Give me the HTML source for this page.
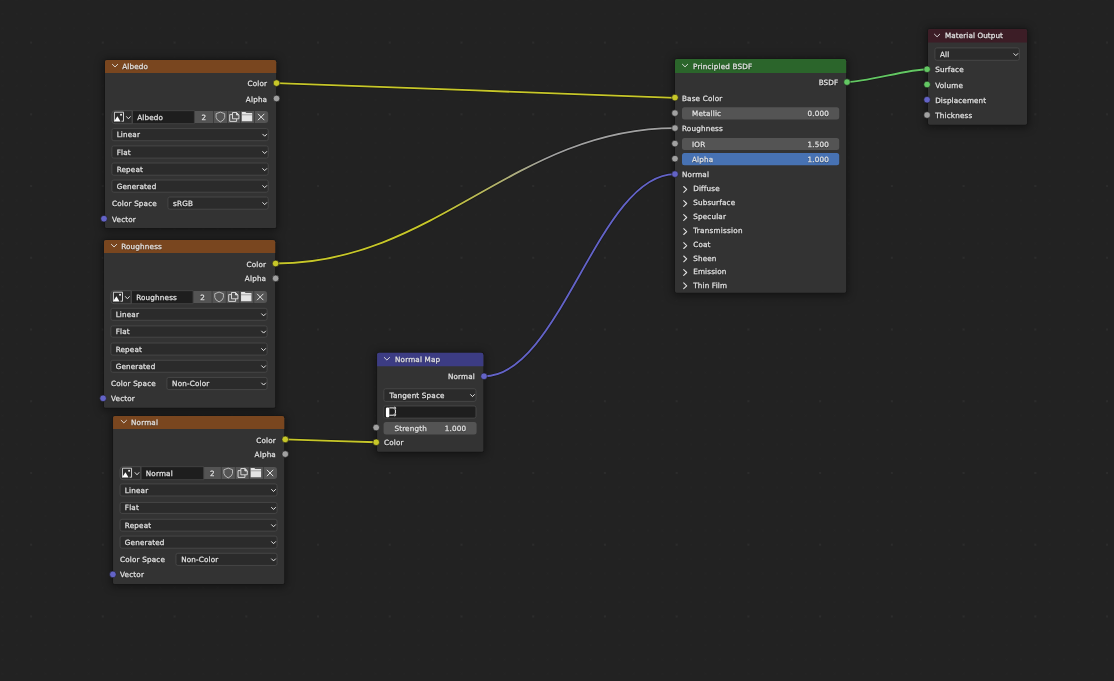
<!DOCTYPE html>
<html><head><meta charset="utf-8"><title>Shader Nodes</title>
<style>
*{box-sizing:border-box;margin:0;padding:0}
html,body{width:1114px;height:681px;overflow:hidden;background:#222222}
body{position:relative;font-family:"DejaVu Sans", "Liberation Sans", sans-serif;font-size:7.2px;color:#e3e3e3;line-height:1}
.sh{position:absolute;border-radius:2px;box-shadow:0 1px 9px 2px rgba(0,0,0,.42)}
.t{position:absolute;white-space:nowrap;letter-spacing:0.18px;-webkit-text-stroke:0.25px #e3e3e3;text-shadow:0 1px 1px rgba(0,0,0,.55);line-height:10px;height:10px}
svg{position:absolute;left:0;top:0;overflow:visible}
.lay{position:absolute;left:0;top:0;width:1114px;height:681px;will-change:transform}
</style></head><body>
<svg width="1114" height="681" viewBox="0 0 1114 681"><defs><linearGradient id="yg" gradientUnits="userSpaceOnUse" x1="275" y1="0" x2="675" y2="0"><stop offset="0.4" stop-color="#c7c729"/><stop offset="0.68" stop-color="#a1a1a1"/></linearGradient><pattern id="gmin" x="23.92" y="35.41" width="14.346" height="14.346" patternUnits="userSpaceOnUse"><rect x="6.62" y="6.62" width="1.1" height="1.1" fill="#252525"/></pattern><pattern id="gmaj" x="-4.77" y="6.71" width="71.730" height="71.730" patternUnits="userSpaceOnUse"><rect x="35.07" y="35.07" width="1.6" height="1.6" fill="#303030"/></pattern></defs>
<rect x="0" y="0" width="1114" height="681" fill="url(#gmin)"/><rect x="0" y="0" width="1114" height="681" fill="url(#gmaj)"/></svg>
<div class="lay"><div class="sh" style="left:105px;top:60px;width:171.25px;height:168px"></div><div class="sh" style="left:104px;top:240px;width:171.25px;height:167.8px"></div><div class="sh" style="left:113.05px;top:416px;width:171.25px;height:168px"></div><div class="sh" style="left:377.1px;top:352.75px;width:106.3px;height:99.1px"></div><div class="sh" style="left:675px;top:59.1px;width:171.2px;height:233.6px"></div><div class="sh" style="left:928px;top:29px;width:99.1px;height:95.7px"></div></div>
<svg width="1114" height="681" viewBox="0 0 1114 681"><path d="M276.5 83.1 C297.08 83.1 654.42 97.8 675 97.8" fill="none" stroke="#171717" stroke-width="3.1"/><path d="M276.5 83.1 C297.08 83.1 654.42 97.8 675 97.8" fill="none" stroke="#c7c729" stroke-width="1.85"/><path d="M275.6 263.5 C435.36 263.5 515.24 128.1 675 128.1" fill="none" stroke="#171717" stroke-width="3.1"/><path d="M275.6 263.5 C435.36 263.5 515.24 128.1 675 128.1" fill="none" stroke="url(#yg)" stroke-width="1.85"/><path d="M285.25 439.4 C289.24 439.4 372.21 442.25 376.2 442.25" fill="none" stroke="#171717" stroke-width="3.1"/><path d="M285.25 439.4 C289.24 439.4 372.21 442.25 376.2 442.25" fill="none" stroke="#c7c729" stroke-width="1.85"/><path d="M484 376.25 C560.4 376.25 598.6 174.1 675 174.1" fill="none" stroke="#171717" stroke-width="3.1"/><path d="M484 376.25 C560.4 376.25 598.6 174.1 675 174.1" fill="none" stroke="#6363c7" stroke-width="1.85"/><path d="M847 82.1 C864.99 82.1 909.11 69.25 927.1 69.25" fill="none" stroke="#171717" stroke-width="3.1"/><path d="M847 82.1 C864.99 82.1 909.11 69.25 927.1 69.25" fill="none" stroke="#63c763" stroke-width="1.85"/></svg>
<svg width="1114" height="681" viewBox="0 0 1114 681"><path d="M106.8 59.4 L274.25 59.4 Q276.85 59.4 276.85 62 L276.85 226.4 Q276.85 228.6 274.65 228.6 L106.6 228.6 Q104.4 228.6 104.4 226.4 L104.4 61.8 Q104.4 59.4 106.8 59.4 Z" fill="#151515"/><path d="M106.8 60 L274.05 60 Q276.25 60 276.25 62.2 L276.25 226.4 Q276.25 228 274.65 228 L106.6 228 Q105 228 105 226.4 L105 61.8 Q105 60 106.8 60 Z" fill="#333333"/><path d="M106.8 60 L274.05 60 Q276.25 60 276.25 62.2 L276.25 73.1 Q276.25 73.1 276.25 73.1 L105 73.1 Q105 73.1 105 73.1 L105 61.8 Q105 60 106.8 60 Z" fill="#79461f"/><path d="M194.4 111 L265.2 111 Q268.2 111 268.2 114 L268.2 120.1 Q268.2 123.1 265.2 123.1 L194.4 123.1 Q194.4 123.1 194.4 123.1 L194.4 111 Q194.4 111 194.4 111 Z" fill="#545454"/><path d="M115 110.7 L132.3 110.7 Q132.3 110.7 132.3 110.7 L132.3 123.7 Q132.3 123.7 132.3 123.7 L115 123.7 Q112 123.7 112 120.7 L112 113.7 Q112 110.7 115 110.7 Z" fill="#2b2b2b" stroke="#4e4e4e" stroke-width="0.9"/><path d="M132.3 110.7 L194.4 110.7 Q194.4 110.7 194.4 110.7 L194.4 123.7 Q194.4 123.7 194.4 123.7 L132.3 123.7 Q132.3 123.7 132.3 123.7 L132.3 110.7 Q132.3 110.7 132.3 110.7 Z" fill="#1e1e1e" stroke="#444444" stroke-width="0.9"/><path d="M132.3 110.7 L132.3 123.7" stroke="#4a4a4a" stroke-width="0.9"/><path d="M213.5 111 L213.5 123.1" stroke="#3a3a3a" stroke-width="0.9"/><path d="M227.5 111 L227.5 123.1" stroke="#3a3a3a" stroke-width="0.9"/><path d="M240.5 111 L240.5 123.1" stroke="#3a3a3a" stroke-width="0.9"/><path d="M254.5 111 L254.5 123.1" stroke="#3a3a3a" stroke-width="0.9"/><rect x="111.85" y="128.6" width="156.35" height="12.1" rx="1.9" fill="#2b2b2b" stroke="#464646" stroke-width="1"/><rect x="111.85" y="145.9" width="156.35" height="12.2" rx="1.9" fill="#2b2b2b" stroke="#464646" stroke-width="1"/><rect x="111.85" y="163" width="156.35" height="12.2" rx="1.9" fill="#2b2b2b" stroke="#464646" stroke-width="1"/><rect x="111.85" y="180" width="156.35" height="12.2" rx="1.9" fill="#2b2b2b" stroke="#464646" stroke-width="1"/><rect x="167.9" y="197" width="100.3" height="12.2" rx="1.9" fill="#2b2b2b" stroke="#464646" stroke-width="1"/><path d="M105.8 239.4 L273.25 239.4 Q275.85 239.4 275.85 242 L275.85 406.2 Q275.85 408.4 273.65 408.4 L105.6 408.4 Q103.4 408.4 103.4 406.2 L103.4 241.8 Q103.4 239.4 105.8 239.4 Z" fill="#151515"/><path d="M105.8 240 L273.05 240 Q275.25 240 275.25 242.2 L275.25 406.2 Q275.25 407.8 273.65 407.8 L105.6 407.8 Q104 407.8 104 406.2 L104 241.8 Q104 240 105.8 240 Z" fill="#333333"/><path d="M105.8 240 L273.05 240 Q275.25 240 275.25 242.2 L275.25 253.1 Q275.25 253.1 275.25 253.1 L104 253.1 Q104 253.1 104 253.1 L104 241.8 Q104 240 105.8 240 Z" fill="#79461f"/><path d="M193.1 291 L264.1 291 Q267.1 291 267.1 294 L267.1 300.1 Q267.1 303.1 264.1 303.1 L193.1 303.1 Q193.1 303.1 193.1 303.1 L193.1 291 Q193.1 291 193.1 291 Z" fill="#545454"/><path d="M114 290.7 L131.3 290.7 Q131.3 290.7 131.3 290.7 L131.3 303.7 Q131.3 303.7 131.3 303.7 L114 303.7 Q111 303.7 111 300.7 L111 293.7 Q111 290.7 114 290.7 Z" fill="#2b2b2b" stroke="#4e4e4e" stroke-width="0.9"/><path d="M131.3 290.7 L193.1 290.7 Q193.1 290.7 193.1 290.7 L193.1 303.7 Q193.1 303.7 193.1 303.7 L131.3 303.7 Q131.3 303.7 131.3 303.7 L131.3 290.7 Q131.3 290.7 131.3 290.7 Z" fill="#1e1e1e" stroke="#444444" stroke-width="0.9"/><path d="M131.3 290.7 L131.3 303.7" stroke="#4a4a4a" stroke-width="0.9"/><path d="M212.1 291 L212.1 303.1" stroke="#3a3a3a" stroke-width="0.9"/><path d="M226.25 291 L226.25 303.1" stroke="#3a3a3a" stroke-width="0.9"/><path d="M239.75 291 L239.75 303.1" stroke="#3a3a3a" stroke-width="0.9"/><path d="M253.75 291 L253.75 303.1" stroke="#3a3a3a" stroke-width="0.9"/><rect x="110.85" y="308.3" width="156.25" height="12" rx="1.9" fill="#2b2b2b" stroke="#464646" stroke-width="1"/><rect x="110.85" y="325.9" width="156.25" height="11.3" rx="1.9" fill="#2b2b2b" stroke="#464646" stroke-width="1"/><rect x="110.85" y="343" width="156.25" height="12.1" rx="1.9" fill="#2b2b2b" stroke="#464646" stroke-width="1"/><rect x="110.85" y="360.25" width="156.25" height="12" rx="1.9" fill="#2b2b2b" stroke="#464646" stroke-width="1"/><rect x="166.9" y="377.4" width="100.2" height="12.2" rx="1.9" fill="#2b2b2b" stroke="#464646" stroke-width="1"/><path d="M114.85 415.4 L282.3 415.4 Q284.9 415.4 284.9 418 L284.9 582.4 Q284.9 584.6 282.7 584.6 L114.65 584.6 Q112.45 584.6 112.45 582.4 L112.45 417.8 Q112.45 415.4 114.85 415.4 Z" fill="#151515"/><path d="M114.85 416 L282.1 416 Q284.3 416 284.3 418.2 L284.3 582.4 Q284.3 584 282.7 584 L114.65 584 Q113.05 584 113.05 582.4 L113.05 417.8 Q113.05 416 114.85 416 Z" fill="#333333"/><path d="M114.85 416 L282.1 416 Q284.3 416 284.3 418.2 L284.3 429.1 Q284.3 429.1 284.3 429.1 L113.05 429.1 Q113.05 429.1 113.05 429.1 L113.05 417.8 Q113.05 416 114.85 416 Z" fill="#79461f"/><path d="M203.7 467 L274.05 467 Q277.05 467 277.05 470 L277.05 476.1 Q277.05 479.1 274.05 479.1 L203.7 479.1 Q203.7 479.1 203.7 479.1 L203.7 467 Q203.7 467 203.7 467 Z" fill="#545454"/><path d="M123.05 466.7 L140.9 466.7 Q140.9 466.7 140.9 466.7 L140.9 479.7 Q140.9 479.7 140.9 479.7 L123.05 479.7 Q120.05 479.7 120.05 476.7 L120.05 469.7 Q120.05 466.7 123.05 466.7 Z" fill="#2b2b2b" stroke="#4e4e4e" stroke-width="0.9"/><path d="M140.9 466.7 L203.7 466.7 Q203.7 466.7 203.7 466.7 L203.7 479.7 Q203.7 479.7 203.7 479.7 L140.9 479.7 Q140.9 479.7 140.9 479.7 L140.9 466.7 Q140.9 466.7 140.9 466.7 Z" fill="#1e1e1e" stroke="#444444" stroke-width="0.9"/><path d="M140.9 466.7 L140.9 479.7" stroke="#4a4a4a" stroke-width="0.9"/><path d="M221.25 467 L221.25 479.1" stroke="#3a3a3a" stroke-width="0.9"/><path d="M235.35 467 L235.35 479.1" stroke="#3a3a3a" stroke-width="0.9"/><path d="M249.35 467 L249.35 479.1" stroke="#3a3a3a" stroke-width="0.9"/><path d="M263.45 467 L263.45 479.1" stroke="#3a3a3a" stroke-width="0.9"/><rect x="120.05" y="483.9" width="157" height="12.1" rx="1.9" fill="#2b2b2b" stroke="#464646" stroke-width="1"/><rect x="120.05" y="502.4" width="157" height="11" rx="1.9" fill="#2b2b2b" stroke="#464646" stroke-width="1"/><rect x="120.05" y="519.25" width="157" height="11.9" rx="1.9" fill="#2b2b2b" stroke="#464646" stroke-width="1"/><rect x="120.05" y="536.1" width="157" height="12.1" rx="1.9" fill="#2b2b2b" stroke="#464646" stroke-width="1"/><rect x="175.95" y="553.25" width="101.1" height="12.2" rx="1.9" fill="#2b2b2b" stroke="#464646" stroke-width="1"/><path d="M378.9 352.15 L481.4 352.15 Q484 352.15 484 354.75 L484 450.25 Q484 452.45 481.8 452.45 L378.7 452.45 Q376.5 452.45 376.5 450.25 L376.5 354.55 Q376.5 352.15 378.9 352.15 Z" fill="#151515"/><path d="M378.9 352.75 L481.2 352.75 Q483.4 352.75 483.4 354.95 L483.4 450.25 Q483.4 451.85 481.8 451.85 L378.7 451.85 Q377.1 451.85 377.1 450.25 L377.1 354.55 Q377.1 352.75 378.9 352.75 Z" fill="#333333"/><path d="M378.9 352.75 L481.2 352.75 Q483.4 352.75 483.4 354.95 L483.4 366.35 Q483.4 366.35 483.4 366.35 L377.1 366.35 Q377.1 366.35 377.1 366.35 L377.1 354.55 Q377.1 352.75 378.9 352.75 Z" fill="#3c3c83"/><rect x="383.8" y="388.75" width="92.2" height="12.6" rx="1.9" fill="#2b2b2b" stroke="#464646" stroke-width="1"/><rect x="383.8" y="405.95" width="92.2" height="12.2" rx="1.9" fill="#1e1e1e" stroke="#474747" stroke-width="1"/><rect x="383.6" y="421.95" width="93" height="12.5" rx="2.5" fill="#545454"/><path d="M676.8 58.5 L844.2 58.5 Q846.8 58.5 846.8 61.1 L846.8 291.1 Q846.8 293.3 844.6 293.3 L676.6 293.3 Q674.4 293.3 674.4 291.1 L674.4 60.9 Q674.4 58.5 676.8 58.5 Z" fill="#151515"/><path d="M676.8 59.1 L844 59.1 Q846.2 59.1 846.2 61.3 L846.2 291.1 Q846.2 292.7 844.6 292.7 L676.6 292.7 Q675 292.7 675 291.1 L675 60.9 Q675 59.1 676.8 59.1 Z" fill="#333333"/><path d="M676.8 59.1 L844 59.1 Q846.2 59.1 846.2 61.3 L846.2 72.9 Q846.2 72.9 846.2 72.9 L675 72.9 Q675 72.9 675 72.9 L675 60.9 Q675 59.1 676.8 59.1 Z" fill="#2b652b"/><rect x="682" y="107.3" width="157.2" height="12.3" rx="2.5" fill="#545454"/><rect x="682" y="137.9" width="157.2" height="12.2" rx="2.5" fill="#545454"/><rect x="682" y="153" width="157.2" height="12.3" rx="2.5" fill="#4772b3"/><path d="M929.8 28.4 L1025.1 28.4 Q1027.7 28.4 1027.7 31 L1027.7 123.1 Q1027.7 125.3 1025.5 125.3 L929.6 125.3 Q927.4 125.3 927.4 123.1 L927.4 30.8 Q927.4 28.4 929.8 28.4 Z" fill="#151515"/><path d="M929.8 29 L1024.9 29 Q1027.1 29 1027.1 31.2 L1027.1 123.1 Q1027.1 124.7 1025.5 124.7 L929.6 124.7 Q928 124.7 928 123.1 L928 30.8 Q928 29 929.8 29 Z" fill="#333333"/><path d="M929.8 29 L1024.9 29 Q1027.1 29 1027.1 31.2 L1027.1 42.6 Q1027.1 42.6 1027.1 42.6 L928 42.6 Q928 42.6 928 42.6 L928 30.8 Q928 29 929.8 29 Z" fill="#3c1d26"/><rect x="934.9" y="47.9" width="84.4" height="12.4" rx="1.9" fill="#2b2b2b" stroke="#464646" stroke-width="1"/></svg>
<div class="lay"><div class="t" style="top:62px;left:122.2px;">Albedo</div><div class="t" style="top:79px;right:846.8px;">Color</div><div class="t" style="top:95px;right:846.8px;">Alpha</div><div class="t" style="top:113px;left:137.2px;">Albedo</div><div class="t" style="top:113px;left:201.55px;">2</div><div class="t" style="top:130px;left:116.65px;">Linear</div><div class="t" style="top:148px;left:116.65px;">Flat</div><div class="t" style="top:165px;left:116.65px;">Repeat</div><div class="t" style="top:182px;left:116.65px;">Generated</div><div class="t" style="top:199px;left:112px;">Color Space</div><div class="t" style="top:199px;left:173.1px;">sRGB</div><div class="t" style="top:215px;left:112px;">Vector</div><div class="t" style="top:242px;left:121.2px;">Roughness</div><div class="t" style="top:260px;right:847.8px;">Color</div><div class="t" style="top:274px;right:847.8px;">Alpha</div><div class="t" style="top:293px;left:136.2px;">Roughness</div><div class="t" style="top:293px;left:200.2px;">2</div><div class="t" style="top:310px;left:115.65px;">Linear</div><div class="t" style="top:327px;left:115.65px;">Flat</div><div class="t" style="top:345px;left:115.65px;">Repeat</div><div class="t" style="top:362px;left:115.65px;">Generated</div><div class="t" style="top:379px;left:111px;">Color Space</div><div class="t" style="top:379px;left:172.1px;">Non-Color</div><div class="t" style="top:394px;left:111px;">Vector</div><div class="t" style="top:418px;left:131.05px;">Normal</div><div class="t" style="top:436px;right:838.05px;">Color</div><div class="t" style="top:450px;right:838.05px;">Alpha</div><div class="t" style="top:469px;left:145.8px;">Normal</div><div class="t" style="top:469px;left:210.08px;">2</div><div class="t" style="top:486px;left:124.85px;">Linear</div><div class="t" style="top:503px;left:124.85px;">Flat</div><div class="t" style="top:521px;left:124.85px;">Repeat</div><div class="t" style="top:538px;left:124.85px;">Generated</div><div class="t" style="top:555px;left:120.05px;">Color Space</div><div class="t" style="top:555px;left:181.15px;">Non-Color</div><div class="t" style="top:570px;left:120.05px;">Vector</div><div class="t" style="top:355px;left:395px;">Normal Map</div><div class="t" style="top:372px;right:639px;">Normal</div><div class="t" style="top:391px;left:389.6px;">Tangent Space</div><div class="t" style="top:424px;left:394.4px;">Strength</div><div class="t" style="top:424px;right:647.7px;">1.000</div><div class="t" style="top:438px;left:384.1px;">Color</div><div class="t" style="top:62px;left:693px;">Principled BSDF</div><div class="t" style="top:78px;right:275.6px;">BSDF</div><div class="t" style="top:94px;left:682px;">Base Color</div><div class="t" style="top:109px;left:692px;">Metallic</div><div class="t" style="top:109px;right:285px;">0.000</div><div class="t" style="top:124px;left:682px;">Roughness</div><div class="t" style="top:140px;left:692px;">IOR</div><div class="t" style="top:140px;right:285px;">1.500</div><div class="t" style="top:155px;left:692px;">Alpha</div><div class="t" style="top:155px;right:285px;">1.000</div><div class="t" style="top:170px;left:682px;">Normal</div><div class="t" style="top:184px;left:693.2px;">Diffuse</div><div class="t" style="top:198px;left:693.2px;">Subsurface</div><div class="t" style="top:212px;left:693.2px;">Specular</div><div class="t" style="top:226px;letter-spacing:0.27px;left:693.2px;">Transmission</div><div class="t" style="top:240px;left:693.2px;">Coat</div><div class="t" style="top:254px;left:693.2px;">Sheen</div><div class="t" style="top:267px;left:693.2px;">Emission</div><div class="t" style="top:281px;left:693.2px;">Thin Film</div><div class="t" style="top:31px;letter-spacing:0.1px;left:945px;">Material Output</div><div class="t" style="top:50px;left:940px;">All</div><div class="t" style="top:65px;left:935.2px;">Surface</div><div class="t" style="top:81px;left:935.2px;">Volume</div><div class="t" style="top:96px;letter-spacing:0.14px;left:935.2px;">Displacement</div><div class="t" style="top:111px;left:935.2px;">Thickness</div></div>
<svg width="1114" height="681" viewBox="0 0 1114 681"><path d="M112.4 64.35 L115.05 66.95 L117.7 64.35" fill="none" stroke="#e3e3e3" stroke-width="0.92" stroke-linecap="round" stroke-linejoin="round"/><g transform="translate(113.9,111.7)"><path d="M0.5 9.6 L0.5 0.5 L9.6 0.5 L9.6 9.6" fill="none" stroke="#d8d8d8" stroke-width="0.95"/><path d="M0.1 9.9 L3.5 4.6 L6.6 9.9 Z" fill="#fff"/><path d="M7.6 9.5 L9.6 9.5" stroke="#d8d8d8" stroke-width="0.95"/><rect x="6.3" y="2.2" width="1.7" height="1.7" fill="#fff"/></g><path d="M126.45 116.6 L128.4 118.8 L130.35 116.6" fill="none" stroke="#e3e3e3" stroke-width="0.95" stroke-linecap="round" stroke-linejoin="round"/><path d="M220.4 112.1 L224.7 113.7 L224.7 117.4 Q224.3 120.2 220.4 121.9 Q216.5 120.2 216.1 117.4 L216.1 113.7 Z" fill="none" stroke="#bdbdbd" stroke-width="0.95" stroke-linejoin="round"/><g fill="none" stroke="#dcdcdc" stroke-width="0.95"><path d="M232.5 112.5 L236.5 112.5 L238.9 114.9 L238.9 118.8 L232.5 118.8 Z"/><path d="M236.5 112.5 L236.5 114.9 L238.9 114.9 Z" fill="#dcdcdc"/><path d="M232.5 114.6 L229.7 114.6 L229.7 121.4 L236.6 121.4 L236.6 118.8"/></g><path d="M241.8 112.1 L245.4 112.1 L246.4 113.1 L252.2 113.1 L252.2 121.2 L241.8 121.2 Z" fill="#e4e4e4"/><path d="M241.8 114.8 L252.2 114.8" stroke="#777" stroke-width="0.6"/><path d="M258.25 114.1 L264.05 119.9 M264.05 114.1 L258.25 119.9" stroke="#e3e3e3" stroke-width="1" stroke-linecap="round"/><path d="M262.75 134.2 L264.7 136.2 L266.65 134.2" fill="none" stroke="#e3e3e3" stroke-width="1.0" stroke-linecap="round" stroke-linejoin="round"/><path d="M262.75 151.55 L264.7 153.55 L266.65 151.55" fill="none" stroke="#e3e3e3" stroke-width="1.0" stroke-linecap="round" stroke-linejoin="round"/><path d="M262.75 168.65 L264.7 170.65 L266.65 168.65" fill="none" stroke="#e3e3e3" stroke-width="1.0" stroke-linecap="round" stroke-linejoin="round"/><path d="M262.75 185.65 L264.7 187.65 L266.65 185.65" fill="none" stroke="#e3e3e3" stroke-width="1.0" stroke-linecap="round" stroke-linejoin="round"/><path d="M262.75 202.65 L264.7 204.65 L266.65 202.65" fill="none" stroke="#e3e3e3" stroke-width="1.0" stroke-linecap="round" stroke-linejoin="round"/><path d="M111.4 244.35 L114.05 246.95 L116.7 244.35" fill="none" stroke="#e3e3e3" stroke-width="0.92" stroke-linecap="round" stroke-linejoin="round"/><g transform="translate(112.9,291.7)"><path d="M0.5 9.6 L0.5 0.5 L9.6 0.5 L9.6 9.6" fill="none" stroke="#d8d8d8" stroke-width="0.95"/><path d="M0.1 9.9 L3.5 4.6 L6.6 9.9 Z" fill="#fff"/><path d="M7.6 9.5 L9.6 9.5" stroke="#d8d8d8" stroke-width="0.95"/><rect x="6.3" y="2.2" width="1.7" height="1.7" fill="#fff"/></g><path d="M125.45 296.6 L127.4 298.8 L129.35 296.6" fill="none" stroke="#e3e3e3" stroke-width="0.95" stroke-linecap="round" stroke-linejoin="round"/><path d="M219.08 292.1 L223.38 293.7 L223.38 297.4 Q222.98 300.2 219.08 301.9 Q215.18 300.2 214.78 297.4 L214.78 293.7 Z" fill="none" stroke="#bdbdbd" stroke-width="0.95" stroke-linejoin="round"/><g fill="none" stroke="#dcdcdc" stroke-width="0.95"><path d="M231.5 292.5 L235.5 292.5 L237.9 294.9 L237.9 298.8 L231.5 298.8 Z"/><path d="M235.5 292.5 L235.5 294.9 L237.9 294.9 Z" fill="#dcdcdc"/><path d="M231.5 294.6 L228.7 294.6 L228.7 301.4 L235.6 301.4 L235.6 298.8"/></g><path d="M241.05 292.1 L244.65 292.1 L245.65 293.1 L251.45 293.1 L251.45 301.2 L241.05 301.2 Z" fill="#e4e4e4"/><path d="M241.05 294.8 L251.45 294.8" stroke="#777" stroke-width="0.6"/><path d="M257.33 294.1 L263.12 299.9 M263.12 294.1 L257.33 299.9" stroke="#e3e3e3" stroke-width="1" stroke-linecap="round"/><path d="M261.65 313.85 L263.6 315.85 L265.55 313.85" fill="none" stroke="#e3e3e3" stroke-width="1.0" stroke-linecap="round" stroke-linejoin="round"/><path d="M261.65 331.1 L263.6 333.1 L265.55 331.1" fill="none" stroke="#e3e3e3" stroke-width="1.0" stroke-linecap="round" stroke-linejoin="round"/><path d="M261.65 348.6 L263.6 350.6 L265.55 348.6" fill="none" stroke="#e3e3e3" stroke-width="1.0" stroke-linecap="round" stroke-linejoin="round"/><path d="M261.65 365.8 L263.6 367.8 L265.55 365.8" fill="none" stroke="#e3e3e3" stroke-width="1.0" stroke-linecap="round" stroke-linejoin="round"/><path d="M261.65 383.05 L263.6 385.05 L265.55 383.05" fill="none" stroke="#e3e3e3" stroke-width="1.0" stroke-linecap="round" stroke-linejoin="round"/><path d="M121.2 420.35 L123.85 422.95 L126.5 420.35" fill="none" stroke="#e3e3e3" stroke-width="0.92" stroke-linecap="round" stroke-linejoin="round"/><g transform="translate(121.95,467.7)"><path d="M0.5 9.6 L0.5 0.5 L9.6 0.5 L9.6 9.6" fill="none" stroke="#d8d8d8" stroke-width="0.95"/><path d="M0.1 9.9 L3.5 4.6 L6.6 9.9 Z" fill="#fff"/><path d="M7.6 9.5 L9.6 9.5" stroke="#d8d8d8" stroke-width="0.95"/><rect x="6.3" y="2.2" width="1.7" height="1.7" fill="#fff"/></g><path d="M135.05 472.6 L137 474.8 L138.95 472.6" fill="none" stroke="#e3e3e3" stroke-width="0.95" stroke-linecap="round" stroke-linejoin="round"/><path d="M228.2 468.1 L232.5 469.7 L232.5 473.4 Q232.1 476.2 228.2 477.9 Q224.3 476.2 223.9 473.4 L223.9 469.7 Z" fill="none" stroke="#bdbdbd" stroke-width="0.95" stroke-linejoin="round"/><g fill="none" stroke="#dcdcdc" stroke-width="0.95"><path d="M240.85 468.5 L244.85 468.5 L247.25 470.9 L247.25 474.8 L240.85 474.8 Z"/><path d="M244.85 468.5 L244.85 470.9 L247.25 470.9 Z" fill="#dcdcdc"/><path d="M240.85 470.6 L238.05 470.6 L238.05 477.4 L244.95 477.4 L244.95 474.8"/></g><path d="M250.7 468.1 L254.3 468.1 L255.3 469.1 L261.1 469.1 L261.1 477.2 L250.7 477.2 Z" fill="#e4e4e4"/><path d="M250.7 470.8 L261.1 470.8" stroke="#777" stroke-width="0.6"/><path d="M267.15 470.1 L272.95 475.9 M272.95 470.1 L267.15 475.9" stroke="#e3e3e3" stroke-width="1" stroke-linecap="round"/><path d="M271.6 489.5 L273.55 491.5 L275.5 489.5" fill="none" stroke="#e3e3e3" stroke-width="1.0" stroke-linecap="round" stroke-linejoin="round"/><path d="M271.6 507.45 L273.55 509.45 L275.5 507.45" fill="none" stroke="#e3e3e3" stroke-width="1.0" stroke-linecap="round" stroke-linejoin="round"/><path d="M271.6 524.75 L273.55 526.75 L275.5 524.75" fill="none" stroke="#e3e3e3" stroke-width="1.0" stroke-linecap="round" stroke-linejoin="round"/><path d="M271.6 541.7 L273.55 543.7 L275.5 541.7" fill="none" stroke="#e3e3e3" stroke-width="1.0" stroke-linecap="round" stroke-linejoin="round"/><path d="M271.6 558.9 L273.55 560.9 L275.5 558.9" fill="none" stroke="#e3e3e3" stroke-width="1.0" stroke-linecap="round" stroke-linejoin="round"/><path d="M384.25 357.45 L386.9 360.05 L389.55 357.45" fill="none" stroke="#e3e3e3" stroke-width="0.92" stroke-linecap="round" stroke-linejoin="round"/><path d="M470.55 394.6 L472.5 396.6 L474.45 394.6" fill="none" stroke="#e3e3e3" stroke-width="1.0" stroke-linecap="round" stroke-linejoin="round"/><g transform="translate(385.7,406.95)"><rect x="0.2" y="0.6" width="3.4" height="9.6" rx="1.2" fill="#fff"/><path d="M3.6 0.95 L8 0.95 M3.6 8.25 L8 8.25 M9.7 2.6 L9.7 6.6" fill="none" stroke="#ffffff" stroke-width="0.95"/><circle cx="9.1" cy="1.15" r="0.95" fill="#1d1d1d" stroke="#fff" stroke-width="0.85"/><circle cx="9.1" cy="7.95" r="0.95" fill="#1d1d1d" stroke="#fff" stroke-width="0.85"/></g><path d="M682.4 64.25 L685.05 66.85 L687.7 64.25" fill="none" stroke="#e3e3e3" stroke-width="0.92" stroke-linecap="round" stroke-linejoin="round"/><path d="M683.7 186.5 L686.7 189.4 L683.7 192.3" fill="none" stroke="#e3e3e3" stroke-width="1.05" stroke-linecap="round" stroke-linejoin="round"/><path d="M683.7 200.6 L686.7 203.5 L683.7 206.4" fill="none" stroke="#e3e3e3" stroke-width="1.05" stroke-linecap="round" stroke-linejoin="round"/><path d="M683.7 214.6 L686.7 217.5 L683.7 220.4" fill="none" stroke="#e3e3e3" stroke-width="1.05" stroke-linecap="round" stroke-linejoin="round"/><path d="M683.7 228.7 L686.7 231.6 L683.7 234.5" fill="none" stroke="#e3e3e3" stroke-width="1.05" stroke-linecap="round" stroke-linejoin="round"/><path d="M683.7 242.7 L686.7 245.6 L683.7 248.5" fill="none" stroke="#e3e3e3" stroke-width="1.05" stroke-linecap="round" stroke-linejoin="round"/><path d="M683.7 256 L686.7 258.9 L683.7 261.8" fill="none" stroke="#e3e3e3" stroke-width="1.05" stroke-linecap="round" stroke-linejoin="round"/><path d="M683.7 269.6 L686.7 272.5 L683.7 275.4" fill="none" stroke="#e3e3e3" stroke-width="1.05" stroke-linecap="round" stroke-linejoin="round"/><path d="M683.7 282.9 L686.7 285.8 L683.7 288.7" fill="none" stroke="#e3e3e3" stroke-width="1.05" stroke-linecap="round" stroke-linejoin="round"/><path d="M934.45 34.2 L937.1 36.8 L939.75 34.2" fill="none" stroke="#e3e3e3" stroke-width="0.92" stroke-linecap="round" stroke-linejoin="round"/><path d="M1013.85 53.65 L1015.8 55.65 L1017.75 53.65" fill="none" stroke="#e3e3e3" stroke-width="1.0" stroke-linecap="round" stroke-linejoin="round"/><circle cx="276.5" cy="83.1" r="3.3" fill="#c7c729" stroke="#1a1a1a" stroke-width="0.6"/><circle cx="276.5" cy="98.5" r="3.3" fill="#a1a1a1" stroke="#1a1a1a" stroke-width="0.6"/><circle cx="104" cy="218.7" r="3.3" fill="#6363c7" stroke="#1a1a1a" stroke-width="0.6"/><circle cx="275.6" cy="263.5" r="3.3" fill="#c7c729" stroke="#1a1a1a" stroke-width="0.6"/><circle cx="275.6" cy="278.4" r="3.3" fill="#a1a1a1" stroke="#1a1a1a" stroke-width="0.6"/><circle cx="103.1" cy="398.3" r="3.3" fill="#6363c7" stroke="#1a1a1a" stroke-width="0.6"/><circle cx="285.25" cy="439.4" r="3.3" fill="#c7c729" stroke="#1a1a1a" stroke-width="0.6"/><circle cx="285.25" cy="454.1" r="3.3" fill="#a1a1a1" stroke="#1a1a1a" stroke-width="0.6"/><circle cx="112.9" cy="574.4" r="3.3" fill="#6363c7" stroke="#1a1a1a" stroke-width="0.6"/><circle cx="484" cy="376.25" r="3.3" fill="#6363c7" stroke="#1a1a1a" stroke-width="0.6"/><circle cx="376.2" cy="427.55" r="3.3" fill="#a1a1a1" stroke="#1a1a1a" stroke-width="0.6"/><circle cx="376.2" cy="442.25" r="3.3" fill="#c7c729" stroke="#1a1a1a" stroke-width="0.6"/><circle cx="847" cy="82.1" r="3.3" fill="#63c763" stroke="#1a1a1a" stroke-width="0.6"/><circle cx="675" cy="97.6" r="3.3" fill="#c7c729" stroke="#1a1a1a" stroke-width="0.6"/><circle cx="675" cy="113.1" r="3.3" fill="#a1a1a1" stroke="#1a1a1a" stroke-width="0.6"/><circle cx="675" cy="128.1" r="3.3" fill="#a1a1a1" stroke="#1a1a1a" stroke-width="0.6"/><circle cx="675" cy="143.6" r="3.3" fill="#a1a1a1" stroke="#1a1a1a" stroke-width="0.6"/><circle cx="675" cy="158.7" r="3.3" fill="#a1a1a1" stroke="#1a1a1a" stroke-width="0.6"/><circle cx="675" cy="174.1" r="3.3" fill="#6363c7" stroke="#1a1a1a" stroke-width="0.6"/><circle cx="927.1" cy="69.25" r="3.3" fill="#63c763" stroke="#1a1a1a" stroke-width="0.6"/><circle cx="927.1" cy="84.5" r="3.3" fill="#63c763" stroke="#1a1a1a" stroke-width="0.6"/><circle cx="927.1" cy="99.75" r="3.3" fill="#6363c7" stroke="#1a1a1a" stroke-width="0.6"/><circle cx="927.1" cy="115" r="3.3" fill="#a1a1a1" stroke="#1a1a1a" stroke-width="0.6"/></svg>
</body></html>
